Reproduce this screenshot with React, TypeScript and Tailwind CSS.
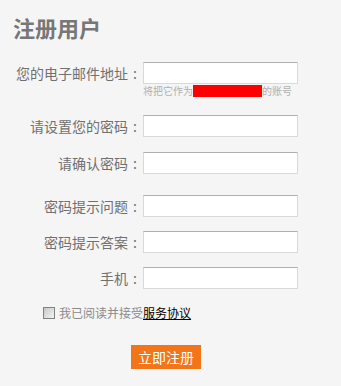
import React from "react";

const font = { fontFamily: '"Noto Sans CJK SC", "Liberation Sans", sans-serif' };

function Row({ label, mt }: { label: string; mt: string }) {
  return (
    <div className={`flex items-center h-[22px] ${mt}`}>
      <div className="w-[143px] pr-[1px] flex justify-end text-[14px] leading-[22px] text-[#707070] whitespace-nowrap">
        <span>{label}</span>
        <span className="inline-block w-[14px] text-center">:</span>
      </div>
      <input
        className="w-[155px] h-[22px] bg-white border border-[#d9d9d9] border-t-[#b0b0b0] outline-none"
        type="text"
      />
    </div>
  );
}

export default function App() {
  return (
    <div className="w-[341px] h-[386px] bg-[#f5f5f5] overflow-hidden" style={font}>
      <div className="pt-[16px] pl-[13px] h-[38px] text-[22px] leading-[22px] font-bold text-[#777777]">
        注册用户
      </div>
      <Row label="您的电子邮件地址" mt="mt-[24px]" />
      <div className="mt-[1px] pl-[143px] h-[12px] flex items-center text-[10px] leading-[12px] text-[#b0b0b0] whitespace-nowrap">
        <span>将把它作为</span>
        <span className="inline-block w-[69px] h-[12px] bg-[#ff0000]" />
        <span>的账号</span>
      </div>
      <Row label="请设置您的密码" mt="mt-[18px]" />
      <Row label="请确认密码" mt="mt-[15px]" />
      <Row label="密码提示问题" mt="mt-[21px]" />
      <Row label="密码提示答案" mt="mt-[14px]" />
      <Row label="手机" mt="mt-[14px]" />
      <div className="mt-[18px] pl-[43px] h-[12px] flex items-center text-[12px] leading-[12px] whitespace-nowrap">
        <span className="inline-block w-[12px] h-[12px] border border-[#808080] bg-gradient-to-br from-[#c8c8c8] to-[#f4f4f4] mr-[4px]" />
        <span className="text-[#8a8a8a]">我已阅读并接受</span>
        <a className="text-black underline" href="#">服务协议</a>
      </div>
      <div className="mt-[25px] pl-[131px]">
        <button className="w-[70px] h-[24px] bg-[#f37519] text-white text-[14px] leading-[24px]">
          立即注册
        </button>
      </div>
    </div>
  );
}
